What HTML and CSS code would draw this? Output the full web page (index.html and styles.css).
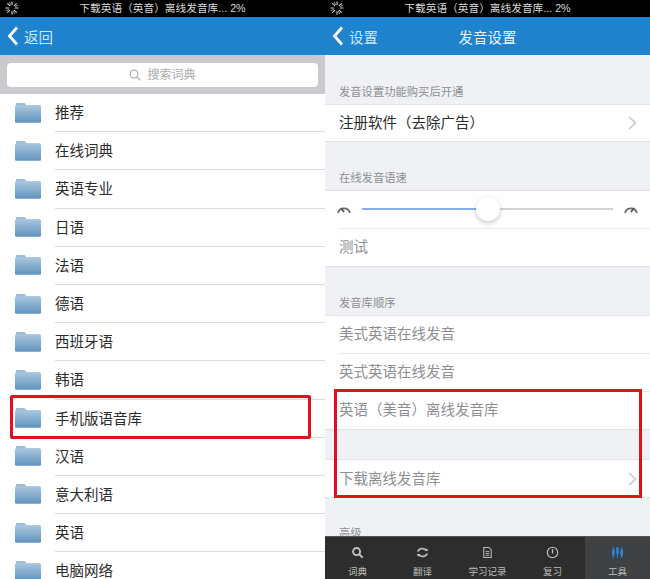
FILE: index.html
```html
<!DOCTYPE html>
<html lang="zh">
<head>
<meta charset="utf-8">
<title>发音设置</title>
<link rel="stylesheet" href="styles.css">
</head>
<body>
<svg class="defs" width="0" height="0" aria-hidden="true">
  <defs>
    <linearGradient id="fg" x1="0" y1="0" x2="0" y2="1">
      <stop offset="0" stop-color="#a9c6de"/>
      <stop offset="1" stop-color="#5f93bd"/>
    </linearGradient>
    <symbol id="folder" viewBox="0 0 26 21">
      <path d="M1 4V2.200C1 1.400 1.500 1 2.200 1H9c.7 0 1.100.4 1.500 1l.8 1.200H25V4z" fill="#9dbcd6"/>
      <path d="M0 4.800C0 4 .5 3.500 1.200 3.500h23.600c.7 0 1.200.5 1.200 1.300V19.500c0 .8-.5 1.200-1.200 1.200H1.200C.5 20.700 0 20.300 0 19.500z" fill="url(#fg)"/>
    </symbol>
    <symbol id="spinner" viewBox="0 0 14 14">
      <g stroke="#cfcfcf" stroke-width="1.100" stroke-linecap="round">
        <path d="M7 .8v3M7 10.200v3M.8 7h3M10.200 7h3M2.600 2.600l2.100 2.100M9.300 9.300l2.100 2.100M2.600 11.400l2.100-2.100M9.300 4.700l2.100-2.100" />
        <path d="M4.500 1.300l1 2.300M9.500 12.700l-1-2.300M1.300 9.500l2.300-1M12.700 4.500l-2.300 1" stroke="#8a8a8a"/>
      </g>
    </symbol>
    <symbol id="chev" viewBox="0 0 9 14">
      <path d="M1 1l6.500 6L1 13" fill="none" stroke="#c7c7cc" stroke-width="1.600"/>
    </symbol>
    <symbol id="back" viewBox="0 0 12 20">
      <path d="M10 1.500L2.500 10l7.500 8.500" fill="none" stroke="#fff" stroke-width="2.800"/>
    </symbol>
  </defs>
</svg>
<main class="screens">
  <section class="screen">
    <div class="status"><svg class="spin"><use href="#spinner"/></svg><span>下载英语（英音）离线发音库... 2%</span></div>
    <header class="nav"><svg class="back"><use href="#back"/></svg><span class="nav-back">返回</span></header>
    <div class="search">
      <div class="search-box">
        <svg class="search-icon" viewBox="0 0 12 12"><circle cx="5" cy="5" r="3.900" fill="none" stroke="#a8a8ac" stroke-width="1.100"/><path d="M8 8l3.400 3.400" stroke="#a8a8ac" stroke-width="1.200"/></svg>
        <span class="search-text">搜索词典</span>
      </div>
    </div>
    <ul class="folders">
      <li class="folder"><svg class="folder-icon"><use href="#folder"/></svg><span class="folder-name">推荐</span></li>
      <li class="folder"><svg class="folder-icon"><use href="#folder"/></svg><span class="folder-name">在线词典</span></li>
      <li class="folder"><svg class="folder-icon"><use href="#folder"/></svg><span class="folder-name">英语专业</span></li>
      <li class="folder"><svg class="folder-icon"><use href="#folder"/></svg><span class="folder-name">日语</span></li>
      <li class="folder"><svg class="folder-icon"><use href="#folder"/></svg><span class="folder-name">法语</span></li>
      <li class="folder"><svg class="folder-icon"><use href="#folder"/></svg><span class="folder-name">德语</span></li>
      <li class="folder"><svg class="folder-icon"><use href="#folder"/></svg><span class="folder-name">西班牙语</span></li>
      <li class="folder"><svg class="folder-icon"><use href="#folder"/></svg><span class="folder-name">韩语</span></li>
      <li class="folder"><svg class="folder-icon"><use href="#folder"/></svg><span class="folder-name">手机版语音库</span></li>
      <li class="folder"><svg class="folder-icon"><use href="#folder"/></svg><span class="folder-name">汉语</span></li>
      <li class="folder"><svg class="folder-icon"><use href="#folder"/></svg><span class="folder-name">意大利语</span></li>
      <li class="folder"><svg class="folder-icon"><use href="#folder"/></svg><span class="folder-name">英语</span></li>
      <li class="folder"><svg class="folder-icon"><use href="#folder"/></svg><span class="folder-name">电脑网络</span></li>
    </ul>
    <div class="mark mark-left"></div>
  </section>
  <section class="screen screen-settings">
    <div class="status"><svg class="spin"><use href="#spinner"/></svg><span>下载英语（英音）离线发音库... 2%</span></div>
    <header class="nav"><svg class="back"><use href="#back"/></svg><span class="nav-back">设置</span><h1 class="nav-title">发音设置</h1></header>
    <div class="settings">
      <h2 class="label label-first">发音设置功能购买后开通</h2>
      <div class="group">
        <div class="row row-dark"><span>注册软件（去除广告）</span><svg class="chev"><use href="#chev"/></svg></div>
      </div>
      <h2 class="label">在线发音语速</h2>
      <div class="group">
        <div class="row row-slider">
          <svg class="gauge" viewBox="0 0 16 12"><path d="M2 10A6.200 6.200 0 0 1 14 10" fill="none" stroke="#6a6a6a" stroke-width="1.800"/><path d="M8 9L5 5" stroke="#555" stroke-width="1.800"/></svg>
          <div class="track"><div class="track-fill"></div><div class="thumb"></div></div>
          <svg class="gauge" viewBox="0 0 16 12"><path d="M2 10A6.200 6.200 0 0 1 14 10" fill="none" stroke="#6a6a6a" stroke-width="1.800"/><path d="M8 9l3-4" stroke="#555" stroke-width="1.800"/></svg>
        </div>
        <div class="row row-muted"><span>测试</span></div>
      </div>
      <h2 class="label">发音库顺序</h2>
      <div class="group">
        <div class="row row-muted"><span>美式英语在线发音</span></div>
        <div class="row row-muted"><span>英式英语在线发音</span></div>
        <div class="row row-muted"><span>英语（美音）离线发音库</span></div>
      </div>
      <div class="group group-spaced">
        <div class="row row-muted"><span>下载离线发音库</span><svg class="chev"><use href="#chev"/></svg></div>
      </div>
      <h2 class="label label-last">高级</h2>
    </div>
    <nav class="tabs">
      <div class="tab">
        <svg class="tab-icon" viewBox="0 0 14 14"><circle cx="6" cy="6" r="3.800" fill="none" stroke="#c4c4c4" stroke-width="2"/><path d="M9 9l3.500 3.500" stroke="#c4c4c4" stroke-width="2.200"/></svg>
        <span>词典</span>
      </div>
      <div class="tab">
        <svg class="tab-icon" viewBox="0 0 14 14"><path d="M2 6a5 4 0 0 1 9-1.500M12 8a5 4 0 0 1-9 1.500" fill="none" stroke="#bdbdbd" stroke-width="1.800"/><path d="M9 5.500h4l-1-3zM5 8.500H1l1 3z" fill="#bdbdbd"/></svg>
        <span>翻译</span>
      </div>
      <div class="tab">
        <svg class="tab-icon" viewBox="0 0 14 14"><path d="M3 1.500h5.500L11 4v8.500H3z" fill="none" stroke="#bdbdbd" stroke-width="1.100"/><path d="M5 6h4M5 8h4M5 10h4" stroke="#bdbdbd"/></svg>
        <span>学习记录</span>
      </div>
      <div class="tab">
        <svg class="tab-icon" viewBox="0 0 14 14"><circle cx="7" cy="7" r="5.600" fill="none" stroke="#c4c4c4" stroke-width="1.200"/><path d="M7 3.500V8" stroke="#c4c4c4" stroke-width="1.400"/></svg>
        <span>复习</span>
      </div>
      <div class="tab tab-active">
        <svg class="tab-icon" viewBox="0 0 14 14"><path d="M2.500 1v12M7 1v12M11.500 1v12" stroke="#2f86d8" stroke-width="1"/><path d="M2.500 4.500v5M7 2.500v5M11.500 5v5" stroke="#2f86d8" stroke-width="2.800" stroke-linecap="round"/></svg>
        <span>工具</span>
      </div>
    </nav>
    <div class="mark mark-right"></div>
  </section>
</main>
</body>
</html>
```
FILE: styles.css
```css
* { box-sizing: border-box; }
html, body { margin: 0; padding: 0; height: 579px; overflow: hidden; background: #fff; }
body { font-family: "Liberation Sans", "Noto Sans CJK SC", sans-serif; }
.defs { display: block; height: 0; }
h1, h2, ul { margin: 0; padding: 0; font-weight: 400; }
ul { list-style: none; }

.screens { display: grid; grid-template-columns: 325px 325px; height: 579px; }
.screen { position: relative; display: flex; flex-direction: column; height: 579px; overflow: hidden; background: #fff; }
.screen-settings { background: #eff1f4; }

.status { flex: none; height: 17px; background: #000; color: #d8d8d8; font-size: 10.700px; line-height: 16px; display: flex; justify-content: center; position: relative; }
.status span { white-space: nowrap; }
.spin { position: absolute; left: 5px; top: 1px; width: 14px; height: 14px; }

.nav { flex: none; height: 38px; background: #1f82cd; color: #fff; display: flex; align-items: center; padding-left: 7px; position: relative; }
.back { width: 12px; height: 20px; flex: none; }
.nav-back { font-size: 14.500px; margin-left: 5px; color: #cfe6f7; }
.nav-title { position: absolute; left: 0; right: 0; text-align: center; font-size: 14.500px; color: #e8f3fb; }

.search { flex: none; height: 39px; background: #c9c9ce; padding: 8px 7px 7px; }
.search-box { height: 24px; background: #fff; border-radius: 4px; display: flex; align-items: center; justify-content: center; gap: 6px; color: #a9a9ad; font-size: 12px; line-height: 22px; }
.search-icon { width: 12px; height: 12px; margin-top: -1px; }
.search-text { margin-top: 0; }

.folders { flex: none; }
.folder { height: 38.200px; display: flex; align-items: center; padding-left: 15px; }
.folder-icon { width: 26px; height: 21px; flex: none; margin-top: -2px; }
.folder-name { flex: 1; margin-left: 14px; height: 100%; line-height: 39px; font-size: 14.500px; color: #2b2b2b; border-bottom: 1px solid #dcdcdf; }

.settings { flex: 1; min-height: 0; overflow: hidden; display: flex; flex-direction: column; }
.label { flex: none; height: 48px; padding: 28px 14px 0; font-size: 11.300px; line-height: 16px; color: #8e8e93; }
.label-first { height: 49px; padding-top: 29px; }
.label-last { height: 39px; padding-top: 27px; }
.group { flex: none; background: #fff; border-top: 1px solid #e2e4e8; border-bottom: 1px solid #dfe1e5; }
.group-spaced { margin-top: 29px; }
.row { height: 37px; display: flex; align-items: center; justify-content: space-between; padding: 0 14px; font-size: 14.500px; line-height: 34px; }
.row > span { margin-top: -2px; }
.group .row + .row { height: 38px; border-top: 1px solid #e8e8ea; margin-left: 14px; padding-left: 0; }
.row-dark { color: #2b2b2b; height: 36px; }
.row.row-dark > span, .group-spaced .row > span { margin-top: 0; }
.row-muted { color: #8f8f93; }
.chev { width: 9px; height: 14px; margin-right: -1px; }

.row-slider { gap: 9px; padding: 0 11px; }
.gauge { flex: none; width: 16px; height: 12px; margin-top: -2px; }
.track { flex: 1; height: 2px; background: #d2d2d4; position: relative; margin: -1px 1px 0; }
.track-fill { width: 48%; height: 100%; background: #86aee6; }
.thumb { position: absolute; left: 45.500%; top: -11px; width: 24px; height: 24px; border-radius: 50%; background: #fff; box-shadow: 0 2px 5px rgba(0, 0, 0, .22); }

.tabs { flex: none; height: 43px; background: #2d2d2d; border-top: 1px solid #555; display: grid; grid-template-columns: repeat(5, 1fr); }
.tab { display: flex; flex-direction: column; align-items: center; color: #bcbcbc; font-size: 9.500px; line-height: 12px; padding-top: 9px; gap: 7px; }
.tab-icon { width: 13px; height: 13px; flex: none; }
.tab-active { background: #3f4143; }

.mark { position: absolute; border: 3px solid #e3101c; border-radius: 2px; pointer-events: none; }
.mark-left { left: 10px; top: 395px; width: 301px; height: 44px; }
.mark-right { left: 9px; top: 389px; width: 308px; height: 109px; border-radius: 0; }
```
